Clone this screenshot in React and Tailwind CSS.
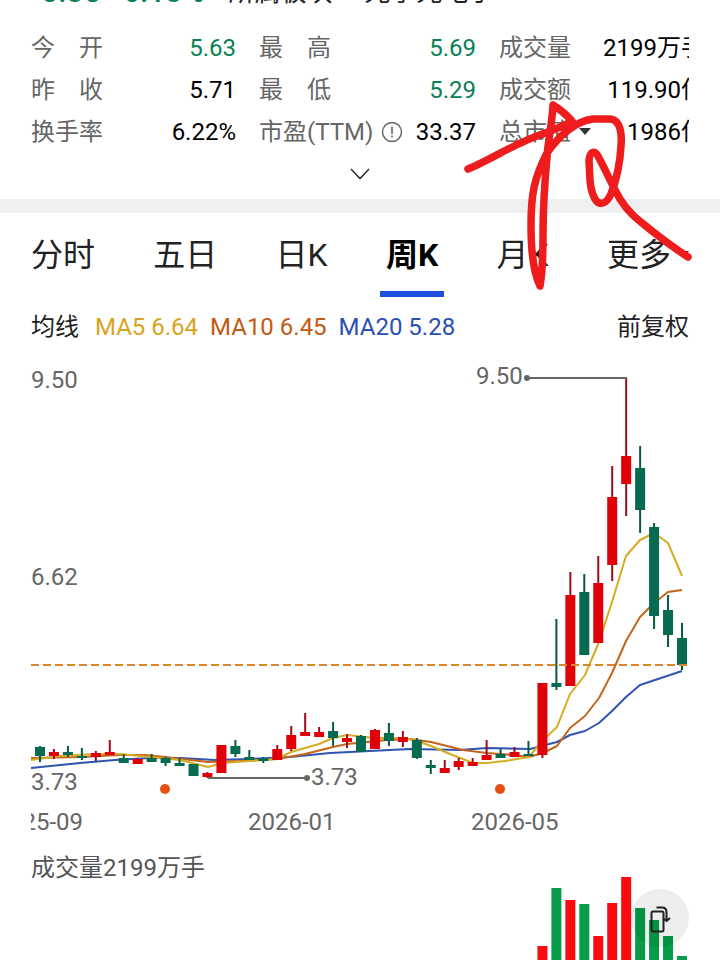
import React, { useState } from "react";

const stats = [
  [
    { label: "今　开", value: "5.63", color: "text-[#0a8055]" },
    { label: "昨　收", value: "5.71", color: "text-black" },
    { label: "换手率", value: "6.22%", color: "text-black" },
  ],
  [
    { label: "最　高", value: "5.69", color: "text-[#0a8055]" },
    { label: "最　低", value: "5.29", color: "text-[#0a8055]" },
    { label: "市盈(TTM)", value: "33.37", color: "text-black", icon: "info" },
  ],
  [
    { label: "成交量", value: "2199万手", color: "text-black" },
    { label: "成交额", value: "119.90亿", color: "text-black" },
    { label: "总市值", value: "1986亿", color: "text-black", icon: "caret" },
  ],
];

const tabs = ["分时", "五日", "日K", "周K", "月K", "更多"];

// [up, high, body top, body bottom, low] in chart units
const candles = [
  [0, 746, 747, 756, 762],
  [1, 749, 752, 756, 759],
  [0, 746, 752, 755, 757],
  [0, 748, 756, 758, 760],
  [1, 751, 753, 757, 761],
  [1, 740, 752, 755, 755],
  [0, 754, 758, 763, 763],
  [1, 758, 759, 764, 764],
  [0, 754, 758, 762, 762],
  [0, 757, 758, 763, 766],
  [0, 758, 763, 766, 766],
  [0, 764, 764, 776, 776],
  [1, 772, 773, 777, 778],
  [1, 745, 745, 773, 773],
  [0, 740, 746, 754, 757],
  [0, 750, 757, 760, 760],
  [0, 757, 758, 761, 763],
  [1, 745, 749, 760, 760],
  [1, 726, 735, 749, 751],
  [1, 713, 732, 736, 736],
  [1, 727, 732, 737, 737],
  [0, 722, 731, 738, 746],
  [1, 734, 738, 742, 748],
  [0, 735, 736, 752, 752],
  [1, 729, 730, 749, 749],
  [0, 723, 733, 741, 746],
  [1, 731, 737, 742, 747],
  [0, 738, 740, 758, 759],
  [0, 760, 765, 768, 774],
  [1, 760, 768, 773, 773],
  [1, 758, 761, 767, 770],
  [1, 758, 762, 766, 766],
  [1, 740, 755, 760, 760],
  [0, 749, 754, 758, 758],
  [1, 747, 752, 757, 757],
  [0, 741, 754, 756, 756],
  [1, 683, 683, 755, 758],
  [0, 619, 683, 687, 690],
  [1, 572, 595, 686, 686],
  [0, 574, 592, 655, 655],
  [1, 556, 583, 643, 643],
  [1, 466, 497, 565, 581],
  [1, 378, 456, 484, 516],
  [0, 446, 468, 510, 533],
  [0, 523, 527, 616, 629],
  [0, 595, 610, 635, 647],
  [0, 623, 638, 665, 670],
];

const ma5 =
  "31,760 60,756 95,754 120,754 180,760 208,767 222,763 250,761 277,759 291,752 319,744 333,738 347,735 375,738 403,738 417,741 431,746 450,754 473,763 487,763 505,761 529,757 543,740 557,727 570,694 585,675 599,642 612,602 626,556 640,540 654,533 668,543 682,576";
const ma10 =
  "31,758 80,757 120,755 145,755 165,757 208,762 240,761 277,759 305,754 333,747 347,744 387,740 410,739 431,742 463,750 487,753 514,755 529,757 543,753 557,746 570,728 585,716 599,698 612,673 626,641 640,617 654,603 668,592 682,590";
const ma20 =
  "31,768 80,763 115,760 150,758 180,758 215,760 250,759 290,757 330,753 370,751 410,749 460,750 487,748 530,749 557,742 570,735 585,731 599,723 612,711 626,697 640,685 682,671";

const volumes = [946, 888, 900, 904, 936, 903, 877, 908, 920, 936, 956];

const candleX = (i) => 40 + (i * 642) / 46;

const Caret = () => (
  <svg width="12" height="8" viewBox="0 0 12 8" aria-hidden="true">
    <path d="M0 0h12L6 7z" fill="#333" />
  </svg>
);

const InfoIcon = () => (
  <svg width="22" height="22" viewBox="0 0 22 22" fill="none" aria-hidden="true">
    <circle cx="11" cy="11" r="9.5" stroke="#666" strokeWidth="1.5" />
    <path d="M11 5.5v7.5M11 14.5v2" stroke="#666" strokeWidth="1.6" />
  </svg>
);

const Stats = () => (
  <div className="grid grid-cols-[205fr_217fr_190fr] gap-x-[23px] overflow-hidden">
    {stats.map((group, i) => (
      <dl key={i} className={i === 2 ? "-mr-4" : ""}>
        {group.map((s) => (
          <div key={s.label} className="flex h-[42px] items-center justify-between whitespace-nowrap">
            <dt className="flex items-center gap-2 text-[#666]">
              {s.label}
              {s.icon === "info" && <InfoIcon />}
              {s.icon === "caret" && <Caret />}
            </dt>
            <dd className={s.color}>{s.value}</dd>
          </div>
        ))}
      </dl>
    ))}
  </div>
);

const KLineChart = () => (
  <svg viewBox="31 350 658 488" className="block w-full" fontSize="24" fill="#666" role="img">
    <g fill="none" strokeWidth="2" strokeLinejoin="round">
      <polyline points={ma20} stroke="#2f55b0" />
      <polyline points={ma10} stroke="#c4651a" />
      <polyline points={ma5} stroke="#d6ac22" />
    </g>
    {candles.map(([up, high, top, bottom, low], i) => (
      <g key={i}>
        <path d={`M${candleX(i)} ${high}V${low}`} stroke={up ? "#a00a18" : "#055a42"} strokeWidth="2" />
        <rect x={candleX(i) - 5} y={top} width="10" height={bottom - top} fill={up ? "#e00008" : "#066b50"} />
      </g>
    ))}
    <path d="M31 665H687" stroke="#d5852c" strokeWidth="2" strokeDasharray="8 4" />
    <path d="M526 378H627M208 778H307" stroke="#666" strokeWidth="2" />
    <circle cx="527" cy="378" r="3" />
    <circle cx="307" cy="778" r="3" />
    <circle cx="165" cy="789" r="5" fill="#ea4d12" />
    <circle cx="500" cy="789" r="5" fill="#ea4d12" />
    <text x="31" y="388">9.50</text>
    <text x="476" y="384">9.50</text>
    <text x="31" y="585">6.62</text>
    <text x="31" y="790">3.73</text>
    <text x="311" y="785">3.73</text>
    <text x="83" y="830" textAnchor="end">2025-09</text>
    <text x="248" y="830">2026-01</text>
    <text x="471" y="830">2026-05</text>
  </svg>
);

const VolumeChart = () => (
  <svg viewBox="31 870 658 90" className="block w-full" role="img">
    {volumes.map((top, i) => (
      <rect
        key={i}
        x={candleX(i + 36) - 5}
        y={top}
        width="10"
        height={962 - top}
        fill={candles[i + 36][0] ? "#fb0b0d" : "#069c48"}
      />
    ))}
  </svg>
);

// freehand pen mark drawn over the page
const PenMark = () => (
  <svg viewBox="0 0 720 300" className="pointer-events-none absolute left-0 top-0 w-full" aria-hidden="true">
    <path
      d="M468 169C490 160 515 143 545 133Q562 127 572 121Q564 112 553 105C552 125 548 140 547 157C544 190 543 215 543 235C543 260 542 275 540 286C532 270 531 245 531 225C531 195 534 178 547 153C558 137 575 121 593 119H610C621 120 622 135 621 146C620 165 616 181 611 194C607 203 600 207 595 199C589 189 590 175 589 160C590 151 595 149 599 158C606 171 613 187 620 199C630 215 640 221 652 231Q671 246 688 257"
      fill="none"
      stroke="#ee1c1c"
      strokeWidth="7.5"
      strokeLinecap="round"
      strokeLinejoin="round"
    />
  </svg>
);

const App = () => {
  const [active, setActive] = useState("周K");

  return (
    <div className="relative h-screen overflow-hidden bg-white font-['Roboto','Noto_Sans_CJK_SC',sans-serif] text-[24px] leading-8">
      <header className="flex h-2 items-end gap-6 overflow-hidden whitespace-nowrap px-[31px]">
        <div className="flex gap-3 text-[30px] font-medium text-[#0a8055]">
          <span>-0.35</span>
          <span>-6.13%</span>
        </div>
        <div className="flex gap-8 text-[26px] text-[#222]">
          <span>所属板块</span>
          <span>光学光电子</span>
        </div>
      </header>

      <section className="px-[31px] pt-[19px]">
        <Stats />
        <button aria-label="展开" className="mx-auto mb-1 flex h-[42px] w-16 items-center justify-center">
          <svg width="20" height="12" viewBox="0 0 20 12" fill="none" aria-hidden="true">
            <path d="M1 1l9 9.5L19 1" stroke="#333" strokeWidth="1.6" />
          </svg>
        </button>
      </section>

      <div className="h-[14px] bg-[#efefef]" />

      <nav className="flex h-[84px] justify-between px-[31px] text-[32px]">
        {tabs.map((t) => (
          <button
            key={t}
            onClick={() => setActive(t)}
            className={
              "relative flex items-center gap-1.5 " + (t === active ? "font-bold text-black" : "text-[#222]")
            }
          >
            {t}
            {t === "更多" && <Caret />}
            {t === active && <span className="absolute bottom-0 left-1/2 h-1.5 w-16 -translate-x-1/2 bg-[#1f4fe0]" />}
          </button>
        ))}
      </nav>

      <section className="px-[31px]">
        <div className="flex h-[53px] items-center gap-3 pt-1.5">
          <span className="mr-1 text-[#222]">均线</span>
          <span className="text-[#d9a41c]">MA5 6.64</span>
          <span className="text-[#c25a10]">MA10 6.45</span>
          <span className="text-[#2a50b4]">MA20 5.28</span>
          <button className="ml-auto text-[#222]">前复权</button>
        </div>
        <KLineChart />
        <div className="relative">
          <p className="-mb-3.5 pt-3.5 text-[#555]">成交量2199万手</p>
          <VolumeChart />
          <button
            aria-label="横屏"
            className="absolute bottom-[13px] right-0 size-[58px] rounded-full bg-black/7"
          >
            <svg viewBox="0 0 58 58" fill="none" stroke="#222" strokeWidth="2" aria-hidden="true">
              <rect x="20.5" y="22.5" width="12" height="20" rx="1.5" />
              <path d="M25.5 18.5H31q4.5 0 4.5 4.5v8M32 29.5l3.500 2.500 3.500-3" />
            </svg>
          </button>
        </div>
      </section>

      <PenMark />
    </div>
  );
};

export default App;
